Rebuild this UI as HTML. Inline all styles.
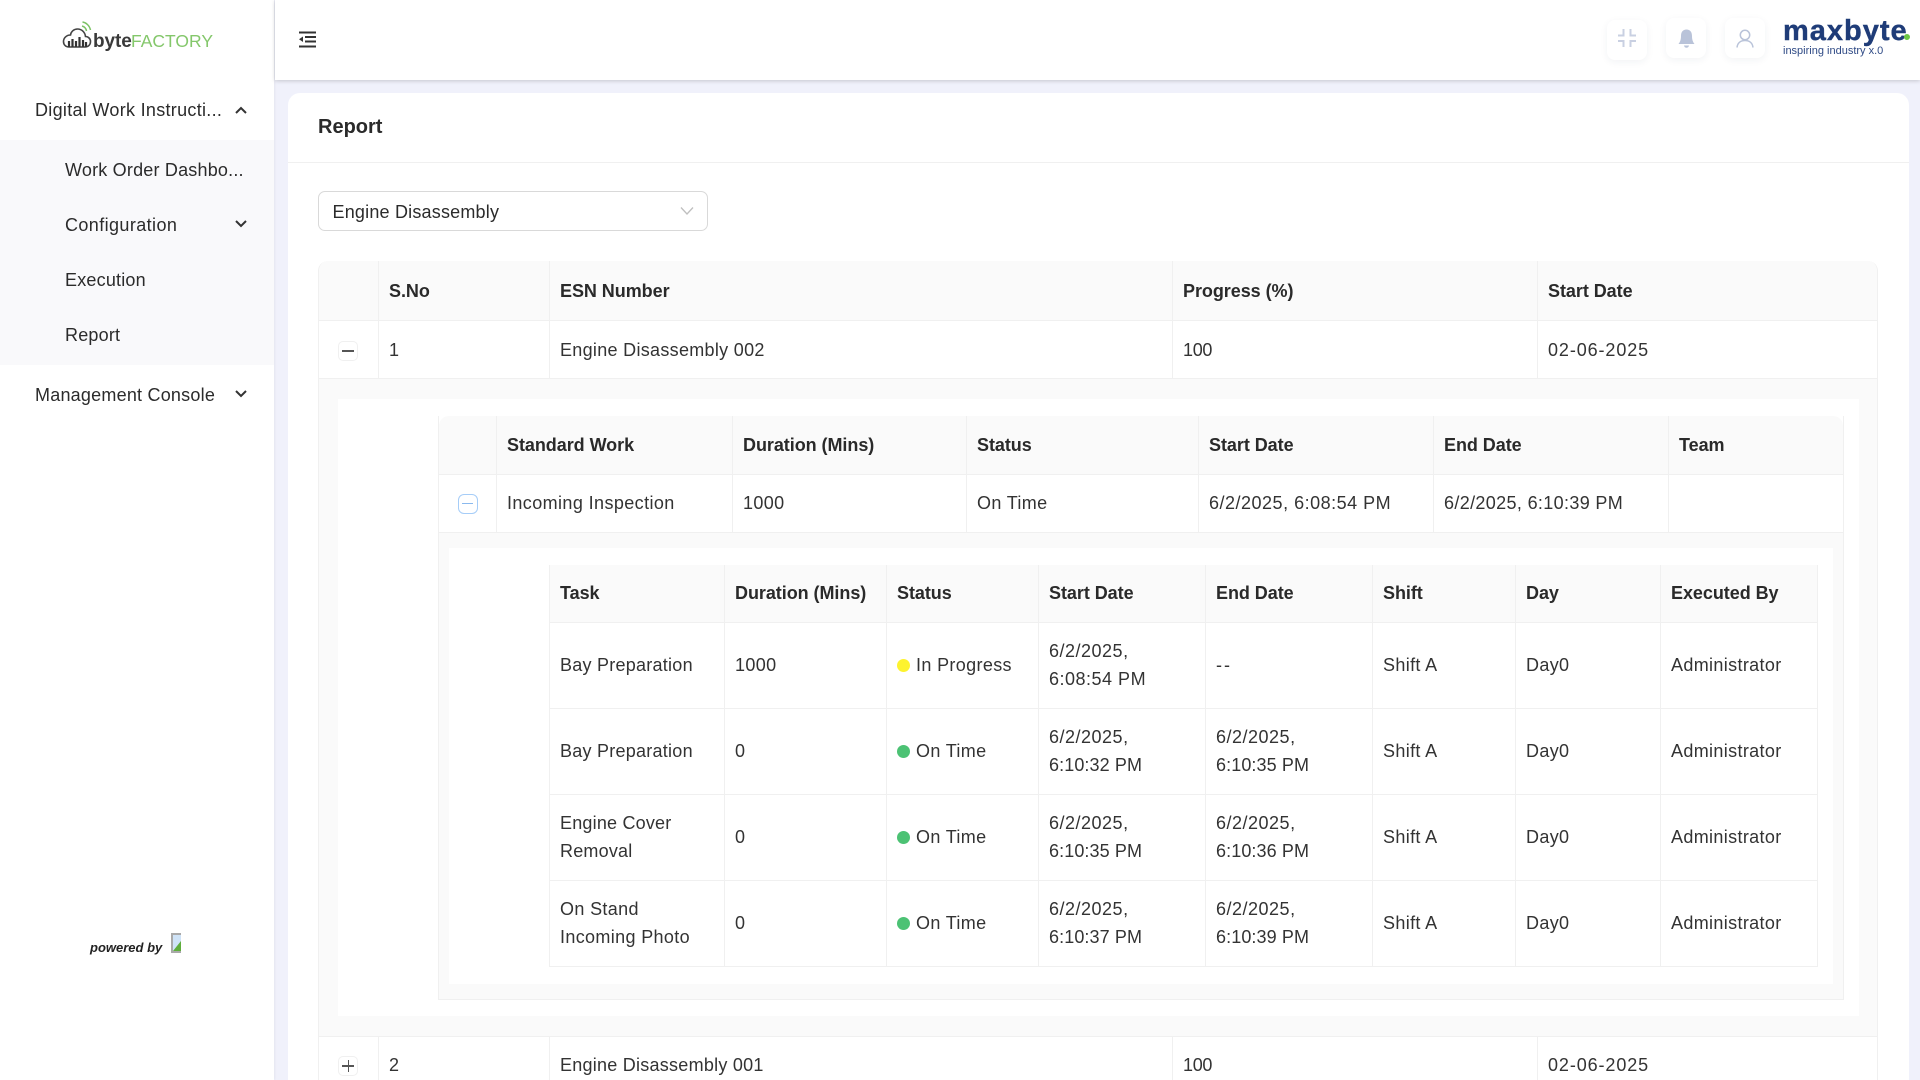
<!DOCTYPE html>
<html lang="en"><head><meta charset="utf-8"><title>Report</title>
<style>
*{box-sizing:border-box}
html,body{margin:0;padding:0;width:1920px;height:1080px;overflow:hidden;background:#f0f1fb;font-family:"Liberation Sans",sans-serif;font-size:18px;letter-spacing:.2px;color:#2b2b2b}
#page{position:relative;width:1920px;height:1080px;overflow:hidden;background:#f0f1fb}
.a{position:absolute}
.t{position:absolute;white-space:nowrap;line-height:28px}
#side{left:0;top:0;width:274px;height:1080px;background:#fff;box-shadow:1px 0 2px rgba(0,0,0,.05)}
#top{left:275px;top:0;width:1645px;height:80px;background:#fff;box-shadow:0 1px 4px rgba(0,0,0,.18)}
#card{left:288px;top:93px;width:1621px;height:987px;background:#fff;border-radius:12px 12px 0 0}
.box{position:absolute;width:40px;height:40px;background:#fff;border-radius:8px;box-shadow:0 2px 8px rgba(40,50,90,.06)}
table{position:absolute;border-collapse:separate;border-spacing:0;table-layout:fixed;line-height:28px}
td,th{padding:0 0 0 10px;border-right:1px solid #f0f0f0;border-bottom:1px solid #f0f0f0;text-align:left;vertical-align:middle;color:#333;font-weight:400;letter-spacing:.35px}
th{background:#fafafa;font-weight:700;color:#2a2a2a;letter-spacing:-.05px}
td.d{letter-spacing:.5px}
.e{letter-spacing:.1px}
.up td,.up th{padding-bottom:2px}
tr>*:last-child{border-right:0}
.out{border-left:1px solid #f0f0f0;border-right:1px solid #f0f0f0}
.dot{display:inline-block;width:13px;height:13px;border-radius:50%;margin-right:6px;vertical-align:-1px}
.btn{position:absolute;width:20px;height:20px;border:1px solid #f0f0f0;border-radius:5px;background:#fff}
</style></head><body>
<div id="page">

<div class="a" id="side">
  <svg class="a" style="left:62px;top:20px" width="30" height="30" viewBox="0 0 30 30" fill="none">
    <path d="M7 27H23C26.5 27 28.5 24.5 28.5 21.5C28.5 18.5 26 16.5 23.5 16.5C23 12 19.5 9 15.5 9C12 9 9 11.5 8.5 15C4.5 15 1.5 18 1.5 21.5C1.5 24.5 3.5 27 7 27Z" stroke="#444" stroke-width="1.6"/>
    <path d="M7 27V21M10.5 27V19M14 27V21M17.5 27V17M21 27V20M24 27V22" stroke="#333" stroke-width="2.2"/>
    <path d="M20 6C22 6.5 24 8 24.5 11M20.5 2C24 2.5 27.5 5.5 28.5 10" stroke="#7cc265" stroke-width="1.5"/>
  </svg>
  <div class="t" style="left:93px;top:28px;font-size:19px;font-weight:700;color:#3a3a3a;letter-spacing:-.1px">byte</div>
  <div class="t" style="left:131px;top:27px;font-size:17.5px;color:#84c76b;letter-spacing:0">FACTORY</div>

  <div class="t" style="left:35px;top:96px;letter-spacing:.3px">Digital Work Instructi...</div>
  <svg class="a" style="left:234px;top:105px" width="14" height="10" viewBox="0 0 14 10" fill="none"><path d="M2 8L7 3L12 8" stroke="#333" stroke-width="2"/></svg>
  <div class="a" style="left:0;top:140px;width:274px;height:225px;background:#f9f9fb"></div>
  <div class="t" style="left:65px;top:156px">Work Order Dashbo...</div>
  <div class="t" style="left:65px;top:211px;letter-spacing:.4px">Configuration</div>
  <svg class="a" style="left:234px;top:219px" width="14" height="10" viewBox="0 0 14 10" fill="none"><path d="M2 2L7 7L12 2" stroke="#333" stroke-width="2"/></svg>
  <div class="t" style="left:65px;top:266px">Execution</div>
  <div class="t" style="left:65px;top:321px">Report</div>
  <div class="t" style="left:35px;top:381px;letter-spacing:.22px">Management Console</div>
  <svg class="a" style="left:234px;top:389px" width="14" height="10" viewBox="0 0 14 10" fill="none"><path d="M2 2L7 7L12 2" stroke="#333" stroke-width="2"/></svg>

  <div class="t" style="left:90px;top:934px;font-size:13px;font-weight:700;font-style:italic;color:#222;letter-spacing:0">powered by</div>
  <svg class="a" style="left:171px;top:933px" width="10" height="20" viewBox="0 0 10 20"><rect width="10" height="20" fill="#a9a9a9"/><rect x="2" y="2" width="8" height="16" fill="#cfe3f7"/><path d="M2 18L10 8V18Z" fill="#5fae3c"/></svg>
</div>

<div class="a" id="top">
  <svg class="a" style="left:23px;top:31px" width="19" height="17" viewBox="0 0 19 17" fill="none"><path d="M1 1.5H18M7 6H18M7 10.5H18M1 15.5H18" stroke="#333" stroke-width="2"/><path d="M1 8.2L5 5.5V11Z" fill="#333"/></svg>
</div>
<div class="box" style="left:1607px;top:20px"><svg class="a" style="left:11px;top:9px" width="18" height="18" viewBox="0 0 18 18" fill="none"><path d="M5.5 0V6.5H0M12.5 0V6.5H18M5.5 18V12H0M12.5 18V12H18" stroke="#c9d0e2" stroke-width="2"/></svg></div>
<div class="box" style="left:1666px;top:18px"><svg class="a" style="left:12px;top:11px" width="17" height="20" viewBox="0 0 17 20"><path d="M8.5 0.5C5 .5 3 3 3 7C3 11 2 13 .5 15H16.5C15 13 14 11 14 7C14 3 12 .5 8.5 .5Z" fill="#b9c3d9"/><path d="M6 16.5C6.5 19.5 10.5 19.5 11 16.5Z" fill="#b9c3d9"/></svg></div>
<div class="box" style="left:1725px;top:18px"><svg class="a" style="left:11px;top:11px" width="18" height="19" viewBox="0 0 18 19" fill="none"><circle cx="9" cy="6" r="4.7" stroke="#b9c3d9" stroke-width="1.5"/><path d="M1 18.5C1.5 14 4.5 11.5 9 11.5C13.5 11.5 16.5 14 17 18.5" stroke="#b9c3d9" stroke-width="1.5"/></svg></div>
<div class="t" style="left:1783px;top:14px;font-size:29px;font-weight:700;color:#1f3c78;letter-spacing:1px;line-height:34px;-webkit-text-stroke:.4px #1f3c78">maxbyte</div>
<div class="a" style="left:1904px;top:34px;width:6px;height:6px;border-radius:50%;background:#6cc644"></div>
<div class="t" style="left:1783px;top:42px;font-size:11px;color:#2f4a85;letter-spacing:0;line-height:18px">inspiring industry x.0</div>

<div class="a" id="card">
  <div class="a" style="left:0;top:69px;width:1621px;height:1px;background:#f0f0f0"></div>
  <div class="t" style="left:30px;top:20px;font-size:20px;font-weight:700;color:#2a2a2a;letter-spacing:0">Report</div>
</div>

<div class="a" style="left:318px;top:191px;width:390px;height:40px;border:1px solid #d9d9d9;border-radius:7px;background:#fff"></div>
<div class="t" style="left:332.5px;top:198px;letter-spacing:.2px">Engine Disassembly</div>
<svg class="a" style="left:680px;top:206px" width="14" height="10" viewBox="0 0 14 10" fill="none"><path d="M1 1.5L7 8L13 1.5" stroke="#bfbfbf" stroke-width="1.3"/></svg>

<!-- Outer table -->
<table class="out" style="left:318px;top:261px;width:1560px;border-radius:10px 10px 0 0">
<colgroup><col style="width:60px"><col style="width:171px"><col style="width:623px"><col style="width:365px"><col></colgroup>
<tr style="height:60px"><th style="border-radius:10px 0 0 0"></th><th>S.No</th><th>ESN Number</th><th>Progress (%)</th><th style="border-radius:0 10px 0 0">Start Date</th></tr>
<tr style="height:58px"><td></td><td>1</td><td style="letter-spacing:.3px">Engine Disassembly 002</td><td style="letter-spacing:-.3px">100</td><td style="letter-spacing:.9px">02-06-2025</td></tr>
</table>
<div class="btn" style="left:338px;top:341px"><div class="a" style="left:3px;top:8px;width:12px;height:1.5px;background:#555"></div></div>

<!-- Expanded level 1 -->
<div class="a" style="left:318px;top:379px;width:1560px;height:658px;background:#fafafa;border-left:1px solid #f0f0f0;border-right:1px solid #f0f0f0;border-bottom:1px solid #f0f0f0"></div>
<div class="a" style="left:338px;top:399px;width:1521px;height:617px;background:#fff"></div>

<!-- Level 2 table -->
<table class="out" style="left:438px;top:416px;width:1406px">
<colgroup><col style="width:58px"><col style="width:236px"><col style="width:234px"><col style="width:232px"><col style="width:235px"><col style="width:235px"><col></colgroup>
<tr style="height:59px"><th style="border-radius:10px 0 0 0"></th><th>Standard Work</th><th>Duration (Mins)</th><th>Status</th><th>Start Date</th><th>End Date</th><th style="border-radius:0 10px 0 0">Team</th></tr>
<tr class="up" style="height:58px"><td></td><td style="letter-spacing:.4px">Incoming Inspection</td><td>1000</td><td>On Time</td><td class="d">6/2/2025, 6:08:54 PM</td><td style="letter-spacing:.35px">6/2/2025, 6:10:39 PM</td><td></td></tr>
</table>
<div class="btn" style="left:458px;top:494px;border:1.5px solid #a6cdf8;border-radius:6px"><div class="a" style="left:3px;top:7.5px;width:11px;height:1.5px;background:#8ab9ee"></div></div>

<!-- Expanded level 2 -->
<div class="a" style="left:438px;top:533px;width:1406px;height:467px;background:#fafafa;border-left:1px solid #f0f0f0;border-right:1px solid #f0f0f0;border-bottom:1px solid #f0f0f0"></div>
<div class="a" style="left:449px;top:548px;width:1384px;height:436px;background:#fff"></div>

<!-- Level 3 table -->
<table class="out up" style="left:549px;top:565px;width:1269px">
<colgroup><col style="width:175px"><col style="width:162px"><col style="width:152px"><col style="width:167px"><col style="width:167px"><col style="width:143px"><col style="width:145px"><col></colgroup>
<tr style="height:58px"><th>Task</th><th>Duration (Mins)</th><th>Status</th><th>Start Date</th><th>End Date</th><th>Shift</th><th>Day</th><th>Executed By</th></tr>
<tr style="height:86px"><td style="letter-spacing:.25px">Bay Preparation</td><td>1000</td><td><span class="dot" style="background:#fdf32f"></span>In Progress</td><td class="d">6/2/2025,<br>6:08:54 PM</td><td style="letter-spacing:2px">--</td><td>Shift A</td><td>Day0</td><td>Administrator</td></tr>
<tr style="height:86px"><td style="letter-spacing:.25px">Bay Preparation</td><td>0</td><td><span class="dot" style="background:#4cc274"></span>On Time</td><td class="d">6/2/2025,<br><span class="e">6:10:32 PM</span></td><td class="d">6/2/2025,<br><span class="e">6:10:35 PM</span></td><td>Shift A</td><td>Day0</td><td>Administrator</td></tr>
<tr style="height:86px"><td style="letter-spacing:.2px">Engine Cover<br>Removal</td><td>0</td><td><span class="dot" style="background:#4cc274"></span>On Time</td><td class="d">6/2/2025,<br><span class="e">6:10:35 PM</span></td><td class="d">6/2/2025,<br><span class="e">6:10:36 PM</span></td><td>Shift A</td><td>Day0</td><td>Administrator</td></tr>
<tr style="height:86px"><td>On Stand<br>Incoming Photo</td><td>0</td><td><span class="dot" style="background:#4cc274"></span>On Time</td><td class="d">6/2/2025,<br><span class="e">6:10:37 PM</span></td><td class="d">6/2/2025,<br><span class="e">6:10:39 PM</span></td><td>Shift A</td><td>Day0</td><td>Administrator</td></tr>
</table>

<!-- Row 2 -->
<table class="out up" style="left:318px;top:1037px;width:1560px">
<colgroup><col style="width:60px"><col style="width:171px"><col style="width:623px"><col style="width:365px"><col></colgroup>
<tr style="height:58px"><td></td><td>2</td><td style="letter-spacing:.25px">Engine Disassembly 001</td><td style="letter-spacing:-.3px">100</td><td style="letter-spacing:.9px">02-06-2025</td></tr>
</table>
<div class="btn" style="left:338px;top:1056px"><div class="a" style="left:3px;top:8px;width:12px;height:1.5px;background:#555"></div><div class="a" style="left:8.5px;top:3px;width:1.5px;height:12px;background:#555"></div></div>

</div>
</body></html>
